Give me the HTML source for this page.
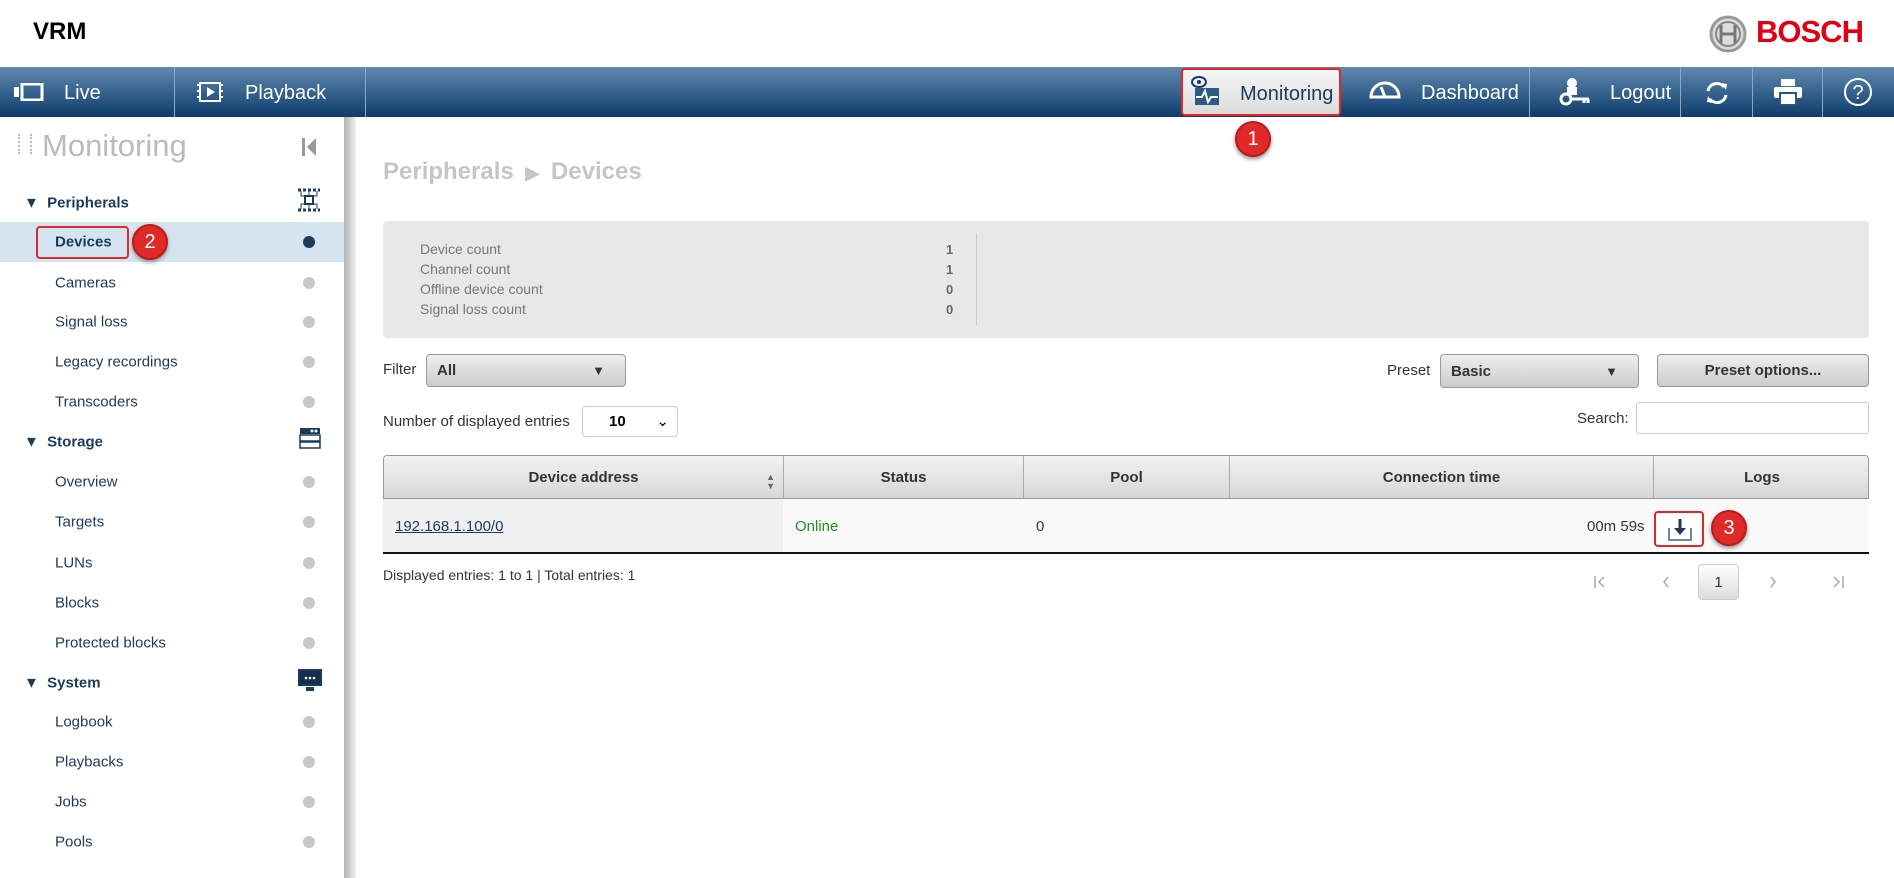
<!DOCTYPE html>
<html><head><meta charset="utf-8"><style>
*{box-sizing:border-box;margin:0;padding:0}
body{width:1894px;height:878px;overflow:hidden;background:#fff;font-family:"Liberation Sans",Arial,sans-serif;position:relative}
.a{position:absolute}
.nav{top:67px;left:0;width:1894px;height:50px;background:linear-gradient(#6089b0,#0d3c6b)}
.ni{position:absolute;top:67px;height:50px;color:#fff;font-size:20px;line-height:52px;border-right:1px solid #8fa9c4}
.side{top:117px;left:0;width:344px;height:761px;background:#fff}
.sh{position:absolute;top:117px;left:344px;width:12px;height:761px;background:linear-gradient(90deg,#b4b4b4,#c8c8c8 40%,#f2f2f2)}
.it{position:absolute;left:55px;font-size:15px;color:#1b3a5c;transform:translateY(-50%)}
.hd{position:absolute;left:24px;font-size:15px;font-weight:bold;color:#1b3a5c;transform:translateY(-50%)}
.dot{position:absolute;left:303px;width:12px;height:12px;border-radius:50%;background:#c8c8c8;transform:translateY(-50%)}
.badge{position:absolute;width:36px;height:36px;border-radius:50%;background:#e02a2a;color:#fff;font-size:20px;text-align:center;line-height:33px;box-shadow:0 2px 4px #888;border:2px solid #c01818}
.lbl{position:absolute;left:420px;font-size:14px;color:#777}
.val{position:absolute;left:946px;font-size:13px;color:#666;font-weight:bold}
.sel{position:absolute;border:1px solid #999;border-radius:4px;background:linear-gradient(#eee,#ccc);font-size:15px;font-weight:bold;color:#333;padding-left:10px}
.th{position:absolute;top:455px;height:44px;background:linear-gradient(#f2f2f2,#d6d6d6);border-right:1px solid #aaa;font-size:15px;font-weight:bold;color:#333;text-align:center;line-height:44px}
.t{font-size:15px;color:#333}
</style></head><body>
<div class="a" style="left:33px;top:18px;font-size:24px;font-weight:bold">VRM</div>
<svg class="a" style="left:1709px;top:15px" width="38" height="38" viewBox="0 0 38 38"><circle cx="19" cy="19" r="17" fill="#ddd" stroke="#999" stroke-width="3"/><circle cx="19" cy="19" r="12" fill="none" stroke="#888" stroke-width="2"/><path d="M12 10v18M26 10v18M12 19h14" stroke="#777" stroke-width="3"/></svg>
<div class="a" style="left:1756px;top:14px;font-size:31px;font-weight:bold;color:#e20015;letter-spacing:-1px">BOSCH</div>

<div class="a nav"></div>
<div class="ni" style="left:0;width:175px"><svg class="a" style="left:14px;top:16px" width="32" height="18"><rect x="0" y="4" width="5" height="10" fill="#fff"/><rect x="8" y="1" width="20" height="16" fill="none" stroke="#fff" stroke-width="3"/></svg><span style="position:absolute;left:64px">Live</span></div>
<div class="ni" style="left:175px;width:191px"><svg class="a" style="left:22px;top:15px" width="26" height="20"><rect x="3" y="1" width="20" height="18" fill="none" stroke="#fff" stroke-width="2"/><path d="M10 5l8 5-8 5z" fill="#fff"/><path d="M0 3h3M0 9h3M0 15h3M23 3h3M23 9h3M23 15h3" stroke="#fff" stroke-width="2"/></svg><span style="position:absolute;left:70px">Playback</span></div>
<div class="ni" style="left:1181px;width:160px;background:linear-gradient(#f6f6f6,#dcdcdc);color:#1b3a5c;border:2px solid #e0282a;border-radius:4px;top:68px;height:48px;line-height:48px"><svg class="a" style="left:8px;top:6px" width="30" height="30"><ellipse cx="8" cy="6" rx="7" ry="5" fill="none" stroke="#1b3a5c" stroke-width="2"/><circle cx="8" cy="6" r="2" fill="#1b3a5c"/><rect x="4" y="12" width="24" height="17" fill="#2c5a85"/><path d="M5 21h6l3-6 3 11 3-5h7" stroke="#fff" stroke-width="2" fill="none"/></svg><span style="position:absolute;left:57px">Monitoring</span></div>
<div class="ni" style="left:1341px;width:189px"><svg class="a" style="left:28px;top:14px" width="32" height="20"><path d="M2 16A14 14 0 0 1 30 16Z" fill="none" stroke="#fff" stroke-width="3"/><path d="M16 16L12 6" stroke="#fff" stroke-width="3"/></svg><span style="position:absolute;left:80px">Dashboard</span></div>
<div class="ni" style="left:1530px;width:151px"><svg class="a" style="left:28px;top:10px" width="34" height="30"><circle cx="14" cy="6" r="5" fill="#fff"/><rect x="9" y="10" width="10" height="8" fill="#fff"/><circle cx="8" cy="22" r="5" fill="none" stroke="#fff" stroke-width="3"/><path d="M13 22h18M26 22v4M30 22v4" stroke="#fff" stroke-width="3"/></svg><span style="position:absolute;left:80px">Logout</span></div>
<div class="ni" style="left:1681px;width:72px"><svg class="a" style="left:22px;top:12px" width="28" height="28" viewBox="0 0 28 28"><path d="M5 12A9 9 0 0 1 21 8M23 16A9 9 0 0 1 7 20" stroke="#fff" stroke-width="3" fill="none"/><path d="M18 4l6 1-1 6zM10 24l-6-1 1-6z" fill="#fff"/></svg></div>
<div class="ni" style="left:1753px;width:70px"><svg class="a" style="left:21px;top:12px" width="28" height="26"><rect x="7" y="0" width="14" height="7" fill="#fff"/><rect x="0" y="8" width="28" height="11" rx="2" fill="#fff"/><rect x="6" y="14" width="16" height="12" fill="#fff" stroke="#2a5580" stroke-width="2"/></svg></div>
<div class="ni" style="left:1823px;width:71px;border:none"><svg class="a" style="left:20px;top:10px" width="30" height="30"><circle cx="15" cy="15" r="13" fill="none" stroke="#fff" stroke-width="2"/><text x="15" y="22" fill="#fff" font-size="20" text-anchor="middle" font-family="Liberation Sans">?</text></svg></div>
<div class="badge" style="left:1235px;top:121px">1</div>

<div class="a side"></div><div class="sh"></div>
<div class="a" style="left:18px;top:134px;width:14px;height:20px;border-left:2px dotted #bbb;border-right:2px dotted #bbb"></div>
<div class="a" style="left:42px;top:128px;font-size:31px;color:#bbb">Monitoring</div>
<svg class="a" style="left:302px;top:138px" width="16" height="18"><rect x="0" y="0" width="3" height="18" fill="#999"/><path d="M14 0v18L5 9z" fill="#999"/></svg>
<div class="a" style="left:0;top:222px;width:344px;height:40px;background:#d4e5f1"></div>
<div class="hd" style="top:203px">▼ &nbsp;Peripherals</div>
<svg class="a" style="left:297px;top:188px" width="24" height="24"><path d="M1 2h22M1 22h22" stroke="#1b3a5c" stroke-width="3" stroke-dasharray="3 2"/><rect x="8" y="8" width="8" height="8" fill="none" stroke="#1b3a5c" stroke-width="2"/><path d="M4 3v5h16V3M4 21v-5h16v5M12 3v5M12 16v5" stroke="#1b3a5c" fill="none"/></svg>
<div class="it" style="top:242px;font-weight:bold">Devices</div>
<div class="a" style="left:36px;top:226px;width:93px;height:33px;border:2px solid #e0282a;border-radius:4px"></div>
<div class="badge" style="left:132px;top:224px">2</div>
<div class="dot" style="top:242px;background:#1b3a5c"></div>
<div class="it" style="top:283px">Cameras</div><div class="dot" style="top:283px"></div>
<div class="it" style="top:322px">Signal loss</div><div class="dot" style="top:322px"></div>
<div class="it" style="top:362px">Legacy recordings</div><div class="dot" style="top:362px"></div>
<div class="it" style="top:402px">Transcoders</div><div class="dot" style="top:402px"></div>
<div class="hd" style="top:442px">▼ &nbsp;Storage</div>
<svg class="a" style="left:299px;top:427px" width="22" height="22"><rect x="1" y="1" width="20" height="6" fill="#1b3a5c"/><circle cx="13" cy="4" r="1.5" fill="#fff"/><circle cx="17" cy="4" r="1.5" fill="#fff"/><rect x="1" y="8" width="20" height="6" fill="none" stroke="#1b3a5c" stroke-width="1.5"/><rect x="1" y="15" width="20" height="6" fill="none" stroke="#1b3a5c" stroke-width="1.5"/></svg>
<div class="it" style="top:482px">Overview</div><div class="dot" style="top:482px"></div>
<div class="it" style="top:522px">Targets</div><div class="dot" style="top:522px"></div>
<div class="it" style="top:563px">LUNs</div><div class="dot" style="top:563px"></div>
<div class="it" style="top:603px">Blocks</div><div class="dot" style="top:603px"></div>
<div class="it" style="top:643px">Protected blocks</div><div class="dot" style="top:643px"></div>
<div class="hd" style="top:683px">▼ &nbsp;System</div>
<svg class="a" style="left:297px;top:668px" width="26" height="24"><rect x="1" y="1" width="24" height="17" fill="#1b3a5c"/><rect x="3" y="3" width="20" height="13" fill="#15304d"/><circle cx="9" cy="10" r="1.3" fill="#fff"/><circle cx="13" cy="10" r="1.3" fill="#fff"/><circle cx="17" cy="10" r="1.3" fill="#fff"/><rect x="9" y="19" width="8" height="4" fill="#1b3a5c"/></svg>
<div class="it" style="top:722px">Logbook</div><div class="dot" style="top:722px"></div>
<div class="it" style="top:762px">Playbacks</div><div class="dot" style="top:762px"></div>
<div class="it" style="top:802px">Jobs</div><div class="dot" style="top:802px"></div>
<div class="it" style="top:842px">Pools</div><div class="dot" style="top:842px"></div>

<div class="a" style="left:383px;top:158px;font-size:24px;font-weight:bold;color:#c6c6c6">Peripherals <span style="font-size:18px">&nbsp;▶&nbsp;</span> Devices</div>
<div class="a" style="left:383px;top:221px;width:1486px;height:117px;background:#e8e8e8;border-radius:4px"></div>
<div class="a" style="left:976px;top:233px;width:1px;height:93px;background:#ccc"></div>
<div class="lbl" style="top:241px">Device count</div><div class="val" style="top:242px">1</div>
<div class="lbl" style="top:261px">Channel count</div><div class="val" style="top:262px">1</div>
<div class="lbl" style="top:281px">Offline device count</div><div class="val" style="top:282px">0</div>
<div class="lbl" style="top:301px">Signal loss count</div><div class="val" style="top:302px">0</div>

<div class="a t" style="left:383px;top:361px">Filter</div>
<div class="sel" style="left:426px;top:354px;width:200px;height:33px;line-height:31px">All<span style="position:absolute;right:20px;font-size:13px">▼</span></div>
<div class="a t" style="left:1387px;top:362px">Preset</div>
<div class="sel" style="left:1440px;top:354px;width:199px;height:34px;line-height:33px">Basic<span style="position:absolute;right:20px;font-size:13px">▼</span></div>
<div class="sel" style="left:1657px;top:354px;width:212px;height:33px;line-height:31px;text-align:center;padding:0">Preset options...</div>
<div class="a t" style="left:383px;top:413px">Number of displayed entries</div>
<div class="a" style="left:582px;top:406px;width:96px;height:31px;border:1px solid #ccc;border-radius:4px;font-size:15px;font-weight:bold;line-height:29px;padding-left:26px">10<span style="position:absolute;right:8px;font-weight:normal">⌄</span></div>
<div class="a t" style="left:1577px;top:410px">Search:</div>
<div class="a" style="left:1636px;top:402px;width:233px;height:32px;border:1px solid #ccc;border-radius:3px"></div>

<div class="a" style="left:383px;top:455px;width:1486px;height:44px;border:1px solid #999;border-radius:4px 4px 0 0;overflow:hidden">
<div class="th" style="left:0;top:0;width:400px">Device address<span style="position:absolute;right:8px;font-size:9px;line-height:9px;top:17px;color:#666">▲<br>▼</span></div>
<div class="th" style="left:400px;top:0;width:240px">Status</div>
<div class="th" style="left:640px;top:0;width:206px">Pool</div>
<div class="th" style="left:846px;top:0;width:424px">Connection time</div>
<div class="th" style="left:1270px;top:0;width:216px;border:none">Logs</div>
</div>
<div class="a" style="left:383px;top:499px;width:400px;height:54px;background:#f0f0f0"></div>
<div class="a" style="left:783px;top:499px;width:1086px;height:54px;background:#f9f9f9"></div>
<div class="a" style="left:383px;top:552px;width:1486px;height:2px;background:#111"></div>
<div class="a t" style="left:395px;top:518px;color:#1b3a5c;text-decoration:underline">192.168.1.100/0</div>
<div class="a t" style="left:795px;top:518px;color:#2a8a2a">Online</div>
<div class="a t" style="left:1036px;top:518px">0</div>
<div class="a t" style="left:1587px;top:518px">00m 59s</div>
<div class="a" style="left:1654px;top:511px;width:50px;height:36px;border:2px solid #e0282a;border-radius:4px;background:#fff"><svg style="position:absolute;left:12px;top:5px" width="24" height="24"><path d="M1 10v12h22V10" stroke="#6a8aa8" stroke-width="2" fill="none"/><path d="M12 1v12" stroke="#1b3a5c" stroke-width="3"/><path d="M6 10l6 7 6-7z" fill="#1b3a5c"/></svg></div>
<div class="badge" style="left:1711px;top:510px">3</div>

<div class="a t" style="left:383px;top:567px;font-size:14px">Displayed entries: 1 to 1 | Total entries: 1</div>
<svg class="a" style="left:1593px;top:574px" width="14" height="16"><path d="M2 2v12M11 3L6 8l5 5" stroke="#aaa" stroke-width="1.5" fill="none"/></svg>
<svg class="a" style="left:1659px;top:574px" width="14" height="16"><path d="M9 3L5 8l4 5" stroke="#aaa" stroke-width="1.5" fill="none"/></svg>
<div class="a" style="left:1698px;top:564px;width:41px;height:36px;border:1px solid #ccc;border-radius:4px;background:linear-gradient(#fff,#ddd);text-align:center;line-height:36px;font-size:15px;color:#333">1</div>
<svg class="a" style="left:1766px;top:574px" width="14" height="16"><path d="M5 3l4 5-4 5" stroke="#aaa" stroke-width="1.5" fill="none"/></svg>
<svg class="a" style="left:1831px;top:574px" width="14" height="16"><path d="M12 2v12M3 3l5 5-5 5" stroke="#aaa" stroke-width="1.5" fill="none"/></svg>
</body></html>
